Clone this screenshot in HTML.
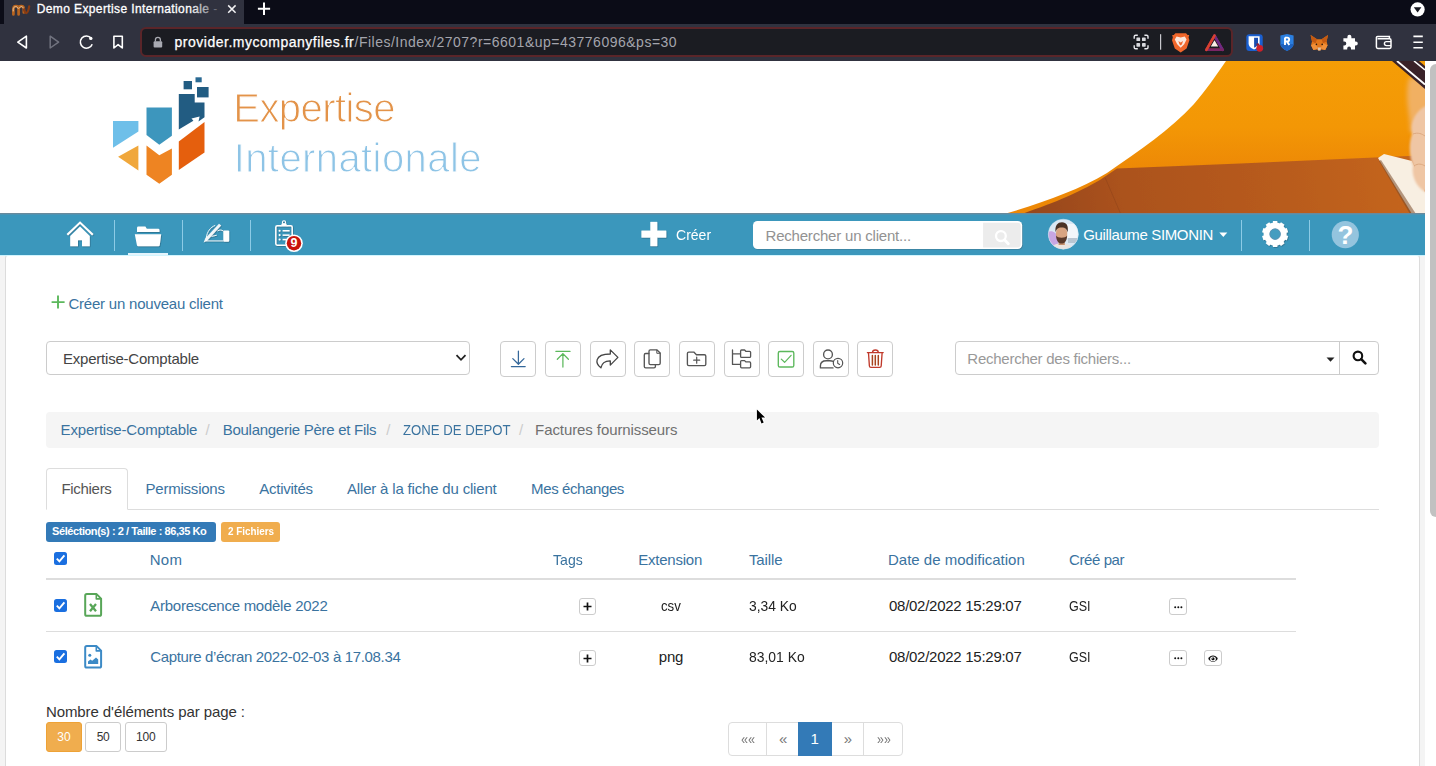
<!DOCTYPE html>
<html lang="fr">
<head>
<meta charset="utf-8">
<title>Demo Expertise Internationale</title>
<style>
*{box-sizing:border-box;margin:0;padding:0}
html,body{width:1436px;height:766px;overflow:hidden;background:#fff}
body{font-family:"Liberation Sans",sans-serif;position:relative;color:#333}
.a{position:absolute}
.t{position:absolute;white-space:nowrap;line-height:20px}
svg{position:absolute;overflow:visible}
/* chrome */
#tabstrip{left:0;top:0;width:1436px;height:24px;background:#0b0c17}
#tab{left:4px;top:0;width:240px;height:24px;background:#30323f}
#toolbar{left:0;top:24px;width:1436px;height:37px;background:#30323f}
#url{left:140px;top:27px;width:1093px;height:30px;background:#1b1c22;border:2px solid #5a2529;border-radius:6px}
/* page */
#nav{left:0;top:213px;width:1425px;height:42px;background:#3b97bc;border-top:1px solid #688a9c;box-shadow:inset 0 1px 0 #4f93b2}
.sep{position:absolute;top:220px;width:1px;height:31px;background:#8ccbe6}
#pagebg{left:0;top:255px;width:1425px;height:511px;background:#f4f4f4;border-top:1px solid #c9f3fd}
#panel{left:5px;top:255px;width:1415px;height:540px;background:#fff;border:1px solid #dcdcdc;border-top-color:#d2f5fe;border-radius:3px 3px 0 0}
#sbar{left:1425px;top:61px;width:11px;height:705px;background:#fff}
#thumb{left:1430px;top:64px;width:12px;height:453px;background:#c1c1c1;border-radius:6px}
.btn{position:absolute;background:#fff;border:1px solid #ccc;border-radius:4px}
</style>
</head>
<body>
<!-- ===== browser chrome ===== -->
<div class="a" id="tabstrip"></div>
<div class="a" id="tab"></div>
<div class="a" id="toolbar"></div>
<div class="a" id="url"></div>
<svg style="left:0;top:0" width="1436" height="61" viewBox="0 0 1436 61">
<!-- favicon "mv" -->
<g fill="none" stroke-linecap="round" stroke-linejoin="round">
<path d="M13.4 14.4 V9.2 C13.4 5.2 18.6 5.2 18.6 9.2 V14.4 M18.6 9.2 C18.6 5.2 23.8 5.2 23.8 9.2 V12.4" stroke="#b9651f" stroke-width="2.7"/>
<path d="M23.8 8.8 C24.4 11.6 25.4 13 26.3 13 C27.7 13 28.6 9.7 29.2 6.4" stroke="#8a3c12" stroke-width="2.3"/>
<path d="M13.2 11 V9.2 C13.2 6.2 17.4 5.4 18.2 8.4 M19.4 8 C20.4 5.8 22.8 6 23.2 8" stroke="#e6c7a3" stroke-width="1"/>
</g>
<!-- tab close -->
<path d="M228.2 5.4 L235.6 12.8 M235.6 5.4 L228.2 12.8" stroke="#f2f2f4" stroke-width="1.5"/>
<!-- new tab plus -->
<path d="M264 2.5 V15 M257.9 8.8 H270.1" stroke="#fff" stroke-width="2"/>
<!-- top right dropdown -->
<circle cx="1417.6" cy="9.4" r="7.1" fill="#fff"/>
<path d="M1413.8 7.2 H1421.4 L1417.6 12.6 Z" fill="#16171f"/>
<!-- back / forward -->
<path d="M26.4 36.2 V48 L17.8 42.1 Z" stroke="#fff" stroke-width="1.6" fill="none" stroke-linejoin="round"/>
<path d="M50.2 36.2 V48 L58.6 42.1 Z" stroke="#71737f" stroke-width="1.5" fill="none" stroke-linejoin="round"/>
<!-- reload -->
<path d="M91.2 38.2 A6.1 6.1 0 1 0 92.2 44.2" stroke="#fff" stroke-width="1.6" fill="none"/>
<circle cx="90.8" cy="38.4" r="1.7" fill="#fff"/>
<!-- bookmark -->
<path d="M113.9 36.3 H122.3 V48 L118.1 44.6 L113.9 48 Z" stroke="#fff" stroke-width="1.6" fill="none" stroke-linejoin="round"/>
<!-- lock -->
<rect x="153.6" y="41.2" width="8.6" height="6.2" rx="1" fill="#a9aab2"/>
<path d="M155.4 41.4 V39.8 A2.5 2.5 0 0 1 160.4 39.8 V41.4" stroke="#a9aab2" stroke-width="1.3" fill="none"/>
<!-- qr / grid -->
<g stroke="#e9e9ee" stroke-width="1.4" fill="none">
<path d="M1134.2 38.8 V36.6 Q1134.2 35.2 1135.6 35.2 H1137.8 M1144.4 35.2 H1146.6 Q1148 35.2 1148 36.6 V38.8 M1148 45.2 V47.4 Q1148 48.8 1146.6 48.8 H1144.4 M1137.8 48.8 H1135.6 Q1134.2 48.8 1134.2 47.4 V45.2"/>
</g>
<g fill="#d9d9de">
<rect x="1136.4" y="37.4" width="3.7" height="3.7" rx=".7"/><rect x="1142" y="37.4" width="3.7" height="3.7" rx=".7"/>
<rect x="1136.4" y="43" width="3.7" height="3.7" rx=".7"/><rect x="1142" y="43" width="3.7" height="3.7" rx=".7"/>
</g>
<rect x="1160" y="34.2" width="1.2" height="15.5" fill="#c8c8ce"/>
<!-- brave lion -->
<path d="M1175.4 33.2 H1186 L1187.6 35 L1189.2 35 L1188.6 37.6 L1189.4 40.2 L1186.6 48.6 L1180.7 52.4 L1174.8 48.6 L1172 40.2 L1172.8 37.6 L1172.2 35 L1173.8 35 Z" fill="#f0662b"/>
<path d="M1176.6 36.6 L1180.7 37.6 L1184.8 36.6 L1186.6 39.6 L1184.2 44.2 L1180.7 47.8 L1177.2 44.2 L1174.8 39.6 Z" fill="#fbe6dc"/>
<path d="M1178.4 41 L1180.7 42.6 L1183 41 L1182 44.2 L1180.7 45.6 L1179.4 44.2 Z" fill="#f0662b"/>
<!-- BAT triangle -->
<path d="M1214.5 35.6 L1222.6 49.8 H1206.4 Z" fill="none" stroke="#a8283f" stroke-width="2.6" stroke-linejoin="round"/>
<path d="M1214.5 35.6 L1222.6 49.8" stroke="#6a2a86" stroke-width="2.6" stroke-linecap="round"/>
<path d="M1206.4 49.8 H1222.6" stroke="#7a2566" stroke-width="2.6" stroke-linecap="round"/>
<path d="M1214.5 35.6 L1206.4 49.8" stroke="#d8402f" stroke-width="2.6" stroke-linecap="round"/>
<path d="M1214.5 40.2 L1218.2 46.6 H1210.8 Z" fill="#fbeee6"/>
<!-- bitwarden -->
<rect x="1246.3" y="34.2" width="16.4" height="16.8" rx="3" fill="#1a5fd0"/>
<path d="M1248.6 36.2 H1259.6 V43.2 C1259.6 46.6 1256.8 48.4 1254.1 49.4 C1251.4 48.4 1248.6 46.6 1248.6 43.2 Z" fill="#fff"/>
<path d="M1254.1 37.8 H1258 V43.2 C1258 45.6 1256.2 46.8 1254.1 47.7 Z" fill="#1a4db0"/>
<circle cx="1259.7" cy="48.3" r="3.4" fill="#cf2028"/>
<circle cx="1257.8" cy="44.6" r="1.4" fill="#8a2238"/>
<!-- blue shield R -->
<path d="M1280.4 35.4 L1287 34.1 L1293.6 35.4 V43.8 C1293.6 47.2 1290.4 49.4 1287 51 C1283.6 49.4 1280.4 47.2 1280.4 43.8 Z" fill="#2b7fe0"/>
<path d="M1280.4 44 C1280.8 47.2 1283.8 49.4 1287 51 C1290.2 49.4 1293.2 47.2 1293.6 44 Z" fill="#1f63c0"/>
<path d="M1285 37.6 V45 M1285 37.6 H1287.2 C1289.8 37.6 1289.8 41.4 1287.2 41.4 H1285 M1287 41.4 L1289.3 45" stroke="#fff" stroke-width="1.9" fill="none" stroke-linejoin="round"/>
<!-- metamask fox -->
<path d="M1310.6 35 L1317 39.2 H1321.6 L1328 35 L1326.6 41.4 L1327.6 45.2 L1325.2 50 L1321.8 49.2 L1320.4 50.6 H1318.2 L1316.8 49.2 L1313.4 50 L1311 45.2 L1312 41.4 Z" fill="#e2761b"/>
<path d="M1310.6 35 L1317 39.2 L1315.6 43.2 L1312 41.4 Z M1328 35 L1321.6 39.2 L1323 43.2 L1326.6 41.4 Z" fill="#c45a12"/>
<path d="M1315.6 43.2 L1317.6 47.4 L1316.8 49.2 L1313.4 50 L1311 45.2 Z M1323 43.2 L1321 47.4 L1321.8 49.2 L1325.2 50 L1327.6 45.2 Z" fill="#f0903a"/>
<path d="M1317.6 47.4 H1321 L1320.4 50.6 H1318.2 Z" fill="#d9c3b0"/>
<circle cx="1316.4" cy="44.4" r=".8" fill="#2a1a10"/><circle cx="1322.2" cy="44.4" r=".8" fill="#2a1a10"/>
<!-- puzzle -->
<path d="M1347.4 36.8 A2 2 0 0 1 1351.4 36.8 V38.2 H1355 V41.6 H1355.8 A2 2 0 0 1 1355.8 45.6 H1355 V49.4 H1351 V48.4 A1.9 1.9 0 0 0 1347.2 48.4 V49.4 H1343.4 V45.4 H1344.4 A1.9 1.9 0 0 0 1344.4 41.6 H1343.4 V38.2 H1347.4 Z" fill="#fff"/>
<!-- wallet -->
<path d="M1376.4 37.6 Q1376.4 36.4 1377.6 36.4 H1389.4 V38.8 M1376.4 37.6 V47 Q1376.4 48.4 1377.8 48.4 H1389.6 Q1391 48.4 1391 47 V40.2 Q1391 38.8 1389.6 38.8 H1377.6" stroke="#fff" stroke-width="1.5" fill="none"/>
<path d="M1391 41.6 H1386.4 A2 2 0 0 0 1386.4 45.6 H1391" stroke="#fff" stroke-width="1.4" fill="none"/>
<!-- hamburger -->
<path d="M1413.4 36.4 H1422.8 M1413.4 42.2 H1422.8 M1413.4 47.8 H1422.8" stroke="#fff" stroke-width="1.6"/>
</svg>

<!-- ===== banner ===== -->
<svg style="left:0;top:61px" width="1425" height="152" viewBox="0 61 1425 152">
<defs>
<clipPath id="bclip"><rect x="0" y="61" width="1425" height="152"/></clipPath>
<linearGradient id="brn" gradientUnits="userSpaceOnUse" x1="1030" y1="214" x2="1400" y2="150"><stop offset="0" stop-color="#96471e"/><stop offset=".25" stop-color="#ab521c"/><stop offset=".7" stop-color="#b95c1c"/><stop offset="1" stop-color="#c4651d"/></linearGradient>
<linearGradient id="org" gradientUnits="userSpaceOnUse" x1="0" y1="61" x2="0" y2="170"><stop offset="0" stop-color="#f59d06"/><stop offset=".6" stop-color="#f39705"/><stop offset="1" stop-color="#ed8806"/></linearGradient>
<filter id="soft" x="-5%" y="-5%" width="110%" height="110%"><feGaussianBlur stdDeviation="0.6"/></filter>
<filter id="soft2" x="-30%" y="-30%" width="160%" height="160%"><feGaussianBlur stdDeviation="2.2"/></filter>
<filter id="soft3" x="-20%" y="-20%" width="140%" height="140%"><feGaussianBlur stdDeviation="1"/></filter>
</defs>
<g clip-path="url(#bclip)">
<!-- orange surface -->
<path d="M1226 61 C1214 78 1206 90 1194 104 C1170 130 1140 150 1107 173 C1078 190 1045 202 1006 213.5 L1425 213.5 L1425 61 Z" fill="url(#org)"/>
<!-- brown lower region -->
<path d="M1117 168.4 L1240 163.4 L1425 155.3 L1425 214 L1022 214 C1040 207.5 1054 202.5 1066.8 196.8 C1082 190 1094 184 1103.6 177.6 Z" fill="url(#brn)" filter="url(#soft)"/>
<path d="M1105.3 178 L1120.3 213" stroke="#8e431a" stroke-width="0.9" opacity=".6"/>
<!-- paper -->
<path d="M1378 158 L1384 154 L1412 161 L1425 192 L1425 214 L1412 214 Z" fill="#f8efe2"/>
<path d="M1379 161 L1410 214 L1416 214 L1381 160 Z" fill="#7a4a2a" opacity=".55"/>
<!-- light area near hand -->
<path d="M1409 78 C1404 100 1411 116 1410 132 L1430 132 L1430 78 Z" fill="#f1b062" filter="url(#soft2)"/>
<!-- hand -->
<path d="M1430 104 C1414 110 1410 124 1412 134 C1408 146 1410 158 1413 166 C1411 176 1417 190 1430 194 Z" fill="#efc6a4" filter="url(#soft3)"/>
<path d="M1413 134 C1418 132 1422 134 1425 136 M1414 166 C1418 163 1422 164 1425 166" stroke="#cf9468" stroke-width="1" fill="none" opacity=".6" filter="url(#soft)"/>
<!-- pen / dark strip -->
<path d="M1392 61 L1425 89 L1425 66 L1419 61 Z" fill="#3a2228"/>
<path d="M1397 61 L1425 84.5" stroke="#fff" stroke-width="1.8"/>
<path d="M1414 61 L1425 70" stroke="#fff" stroke-width="1.6"/>
</g>
<!-- logo -->
<g filter="url(#soft)">
<path d="M113 121 H138.4 V131.6 L113 147.8 Z" fill="#6ebfe9"/>
<path d="M146.5 107.4 H171.9 V135.8 L159.3 144.7 L146.5 135 Z" fill="#3e96bd"/>
<path d="M178.8 94 H194.7 V102.4 H204.5 V117.2 L198.5 121.5 L199.6 116.6 L191.5 118.6 L193.4 120.8 L178.8 129.4 Z" fill="#235b82"/>
<rect x="183.6" y="81" width="8.4" height="8.3" fill="#235b82"/>
<rect x="195.5" y="77.3" width="6.2" height="5" fill="#2c6a93"/>
<rect x="197" y="87" width="11.6" height="10.4" fill="#235b82"/>
<path d="M118.1 156.7 L138.4 145.6 V170.6 Z" fill="#f0a73a"/>
<path d="M146.5 145.6 L159.3 155.3 L171.9 148.4 V174.8 L159.3 183.7 L146.5 174.8 Z" fill="#ee8424"/>
<path d="M178.8 141.4 L204.5 121.9 V152.5 L178.8 170 Z" fill="#e55f10"/>
</g>
</svg>

<!-- ===== nav ===== -->
<div class="a" id="nav"></div>
<div class="sep" style="left:114px"></div>
<div class="sep" style="left:182px"></div>
<div class="sep" style="left:250px"></div>
<div class="sep" style="left:1241px"></div>
<div class="sep" style="left:1309px"></div>
<!-- active underline -->
<div class="a" style="left:128px;top:252.6px;width:40px;height:2.6px;background:#e4f5fd"></div>
<svg style="left:0;top:213px" width="1425" height="42" viewBox="0 213 1425 42">
<defs><filter id="ish" x="-20%" y="-20%" width="140%" height="140%"><feDropShadow dx="0.6" dy="0.7" stdDeviation="0.4" flood-color="#1d4458" flood-opacity=".55"/></filter></defs>
<g filter="url(#ish)" fill="#fff">
<!-- home -->
<path d="M67.3 234.8 L80.05 222.6 L92.8 234.8" stroke="#fff" stroke-width="2.1" fill="none" stroke-linejoin="miter"/>
<path d="M80.05 226.6 L89.8 236 V246.2 H82 V240.2 H78 V246.2 H70.2 V236 Z"/>
<!-- folder open -->
<path d="M137 232 V228 Q137 226.6 138.4 226.6 H145.4 L146.8 228.8 H158.2 Q159.5 228.8 159.5 230.2 V232 Z"/>
<path d="M134.8 234.2 H161.2 L159.8 245 Q159.6 246.2 158.4 246.2 H138.3 Q137.1 246.2 136.9 245 Z"/>
<!-- signature hand -->
<path d="M219 223.8 L221.2 225.4 L207.4 240.4 L203.6 242.5 L205.2 238.6 Z" opacity=".92"/>
<path d="M206.2 238.2 C207 231.5 210.5 227.2 215.2 225.4" stroke="#fff" stroke-width="0.9" fill="none"/>
<path d="M217.5 231 C219.5 229.6 221.6 229.8 223.4 231 M211.5 236.4 L216.8 235.2 M205.6 240.9 H223.4" stroke="#fff" stroke-width="0.9" fill="none"/>
<rect x="223.3" y="230.6" width="5.9" height="11.1" rx="1"/>
<!-- clipboard -->
<path d="M281.2 225.8 H277.2 Q275.8 225.8 275.8 227.2 V243.8 Q275.8 245.2 277.2 245.2 H290.8 Q292.2 245.2 292.2 243.8 V227.2 Q292.2 225.8 290.8 225.8 H286.8" stroke="#fff" stroke-width="1.5" fill="none"/>
<path d="M280.6 226.6 L281.8 223.6 H286.2 L287.4 226.6 Z"/>
<circle cx="284" cy="222.4" r="1.6" stroke="#fff" stroke-width="1.1" fill="none"/>
<circle cx="279.6" cy="230.7" r="1.05"/><rect x="282.6" y="230" width="7" height="1.5"/>
<circle cx="279.6" cy="235.1" r="1.05"/><rect x="282.6" y="234.4" width="7" height="1.5"/>
<circle cx="279.6" cy="239.5" r="1.05"/><rect x="282.6" y="238.8" width="7" height="1.5"/>
<!-- big plus -->
<path d="M650.5 222.1 H657.1 V230.8 H666.1 V237.4 H657.1 V246 H650.5 V237.4 H641.6 V230.8 H650.5 Z" stroke="#fff" stroke-width="0.4" stroke-linejoin="round"/>
</g>
<!-- badge -->
<circle cx="294" cy="243.2" r="8.8" fill="#fff"/>
<circle cx="294" cy="243.2" r="7.2" fill="#c8140c"/>
<!-- search client input -->
<rect x="753.6" y="221.7" width="269.4" height="28" rx="4.5" fill="#3f6f86" opacity=".55"/>
<rect x="753" y="221" width="269.2" height="28" rx="4.5" fill="#fff"/>
<path d="M983.1 222.8 H1017.4 Q1020.8 222.8 1020.8 226.2 V244 Q1020.8 247.4 1017.4 247.4 H983.1 Z" fill="#ececec"/>
<circle cx="1000.9" cy="236.1" r="4.9" stroke="#fff" stroke-width="2.3" fill="none"/>
<path d="M1004.7 239.9 L1008.3 243.7" stroke="#fff" stroke-width="2.9" stroke-linecap="round"/>
<!-- avatar -->
<defs><clipPath id="avc"><circle cx="1063.3" cy="234.2" r="15"/></clipPath></defs>
<g clip-path="url(#avc)">
<rect x="1048" y="218" width="31" height="32" fill="#dbe8f4"/>
<rect x="1067" y="224" width="12" height="14" fill="#f2f6fa"/>
<rect x="1068" y="238" width="11" height="5" fill="#b9c6d2"/>
<path d="M1048 232 C1052 230 1057 233 1058 238 V247 H1048 Z" fill="#c7a6e2"/>
<path d="M1050 250 C1051 245.5 1056 243.6 1061.6 243.6 C1067.5 243.6 1072.5 245.5 1074 250 Z" fill="#ebe3df"/>
<rect x="1058.6" y="239" width="6.2" height="6" fill="#c4906f"/>
<ellipse cx="1061.6" cy="233.8" rx="5.7" ry="7.4" fill="#d8a482"/>
<path d="M1056 235.6 C1056.4 242 1059.2 243.6 1061.6 243.6 C1064 243.6 1066.8 242 1067.2 235.6 C1065.4 238.6 1057.8 238.6 1056 235.6 Z" fill="#5a3a2c"/>
<path d="M1055.6 232.4 C1054.6 225.4 1057.6 222.2 1062 222.2 C1066.4 222.2 1068.8 225.6 1067.6 232.4 C1066.8 229.2 1065.6 227.6 1061.6 227.6 C1057.8 227.6 1056.4 229.2 1055.6 232.4 Z" fill="#4a3226"/>
</g>
<circle cx="1063.3" cy="234.2" r="15" fill="none" stroke="#cfe6f2" stroke-width="0.8" opacity=".6"/>
<!-- caret -->
<path d="M1219.3 232.6 H1227.3 L1223.3 237 Z" fill="#fff"/>
<!-- gear -->
<g filter="url(#ish)">
<circle cx="1275.1" cy="234.1" r="8.4" stroke="#fff" stroke-width="6.2" fill="none"/>
<path d="M1275.10 224.60 L1275.10 221.10 M1280.68 226.41 L1282.74 223.58 M1284.14 231.16 L1287.46 230.08 M1284.14 237.04 L1287.46 238.12 M1280.68 241.79 L1282.74 244.62 M1275.10 243.60 L1275.10 247.10 M1269.52 241.79 L1267.46 244.62 M1266.06 237.04 L1262.74 238.12 M1266.06 231.16 L1262.74 230.08 M1269.52 226.41 L1267.46 223.58" stroke="#fff" stroke-width="4.4" stroke-linecap="butt" fill="none"/>
</g>
<circle cx="1275.1" cy="234.1" r="5.3" stroke="#5f93b4" stroke-width="0.9" fill="#459dc0"/>
<!-- help -->
<circle cx="1345.3" cy="234.7" r="13.6" fill="#94c4de"/>
</svg>
<div class="t" style="left:1337.6px;top:220.2px;font-size:26px;line-height:30px;font-weight:700;color:#fff">?</div>
<div class="t" style="left:290.4px;top:236.2px;font-size:12.5px;line-height:14px;font-weight:700;color:#fff">9</div>

<!-- ===== content ===== -->
<div class="a" id="pagebg"></div>
<div class="a" id="panel"></div>
<!-- create client plus -->
<svg style="left:51px;top:295px" width="14" height="14" viewBox="0 0 14 14"><path d="M7 0.6V13.6M0.6 7.1H13.6" stroke="#5cb85c" stroke-width="1.9" fill="none"/></svg>
<!-- select -->
<div class="btn" style="left:46px;top:341px;width:424px;height:34px"></div>
<svg style="left:455px;top:353px" width="12" height="10" viewBox="0 0 12 10"><path d="M1.5 2.2L6 6.8L10.5 2.2" stroke="#222" stroke-width="1.8" fill="none" stroke-linejoin="miter"/></svg>
<!-- action buttons -->
<div class="btn" style="left:500px;top:341px;width:36px;height:36px"></div>
<div class="btn" style="left:545px;top:341px;width:36px;height:36px"></div>
<div class="btn" style="left:590px;top:341px;width:36px;height:36px"></div>
<div class="btn" style="left:634px;top:341px;width:36px;height:36px"></div>
<div class="btn" style="left:679px;top:341px;width:36px;height:36px"></div>
<div class="btn" style="left:724px;top:341px;width:36px;height:36px"></div>
<div class="btn" style="left:768px;top:341px;width:36px;height:36px"></div>
<div class="btn" style="left:813px;top:341px;width:36px;height:36px"></div>
<div class="btn" style="left:857px;top:341px;width:36px;height:36px"></div>
<svg style="left:0;top:341px" width="900" height="36" viewBox="0 341 900 36" fill="none" stroke-linecap="round" stroke-linejoin="round">
<!-- download -->
<g stroke="#35689a" stroke-width="1.25">
<path d="M518.4 351.1 V364.2 M512.8 358.6 L518.4 364.3 L524 358.6 M511.4 366.6 H525.2"/>
</g>
<!-- upload -->
<g stroke="#5cb85c" stroke-width="1.25">
<path d="M555.9 351.4 H570 M562.9 353.6 V367 M557.3 359.3 L562.9 353.6 L568.4 359.3"/>
</g>
<!-- share -->
<path d="M610.3 349.9 L617.9 357.4 L610.3 365.1 V360.8 C606 360.7 602 362.4 600.9 367.8 C597.6 365.2 596.3 362.4 597.2 359.6 C598.4 355.6 603 354 610.3 354 Z" stroke="#444" stroke-width="1.3"/>
<!-- copy -->
<g stroke="#555" stroke-width="1.35">
<path d="M650.4 349.9 H657 L660.2 353.1 V363.2 Q660.2 364.6 658.8 364.6 H650.4 Q649 364.6 649 363.2 V351.3 Q649 349.9 650.4 349.9 Z"/>
<path d="M656.8 350.2 V353.3 H659.9" stroke-width="1"/>
<path d="M648.8 353.5 H645.7 Q644.3 353.5 644.3 354.9 V366.4 Q644.3 367.8 645.7 367.8 H654 Q655.4 367.8 655.4 366.4 V364.8"/>
</g>
<!-- folder plus -->
<g stroke="#555" stroke-width="1.35">
<path d="M688.8 352.1 H693.8 L696.4 354.7 H704.4 Q705.8 354.7 705.8 356.1 V364.2 Q705.8 365.6 704.4 365.6 H688.8 Q687.4 365.6 687.4 364.2 V353.5 Q687.4 352.1 688.8 352.1 Z"/>
<path d="M696.7 357.2 V363.2 M693.7 360.2 H699.7" stroke-width="1.2"/>
</g>
<!-- folder tree -->
<g stroke="#555" stroke-width="1.3">
<path d="M732.5 349.9 V364.4 H740.4 M732.5 353.9 H740.4"/>
<path d="M741.6 350 H744.6 L745.8 351.3 H749.6 Q750.6 351.3 750.6 352.3 V356.4 Q750.6 357.4 749.6 357.4 H741.6 Q740.6 357.4 740.6 356.4 V351 Q740.6 350 741.6 350 Z"/>
<path d="M741.6 360.6 H744.6 L745.8 361.9 H749.6 Q750.6 361.9 750.6 362.9 V366.8 Q750.6 367.8 749.6 367.8 H741.6 Q740.6 367.8 740.6 366.8 V361.6 Q740.6 360.6 741.6 360.6 Z"/>
</g>
<!-- check square -->
<g stroke="#5cb85c" stroke-width="1.35">
<rect x="778.3" y="351.5" width="15.5" height="15.5" rx="1.6"/>
<path d="M781.3 359.1 L784.6 362.3 L791.1 355.3" stroke-width="1.2"/>
</g>
<!-- user clock -->
<g stroke="#555" stroke-width="1.35">
<circle cx="828" cy="354.4" r="4.4"/>
<path d="M833 367.9 H820.4 V366 C820.4 362.4 823.2 360.7 826.4 360.7 H829.8 C831.2 360.7 832.4 361 833.4 361.4"/>
<circle cx="838" cy="363.1" r="4.7" stroke-width="1.2"/>
<path d="M837.7 360.6 V363.3 L839.6 364.4" stroke-width="1.1"/>
</g>
<!-- trash -->
<g stroke="#c0392b" stroke-width="1.35">
<path d="M867.4 352.6 H883.2 M872.5 352.4 C872.6 349.2 878.2 349.2 878.3 352.4"/>
<path d="M868.5 353 L869.4 366 Q869.5 367.4 870.9 367.4 H879.7 Q881.1 367.4 881.2 366 L882.1 353"/>
<path d="M872.4 355.4 V365 M875.3 355.4 V365 M878.3 355.4 V365" stroke-width="1.5" stroke="#a8431d"/>
</g>
</svg>

<!-- search files -->
<div class="btn" style="left:955px;top:341px;width:424px;height:34px"></div>
<div class="a" style="left:1339px;top:342px;width:1px;height:32px;background:#ccc"></div>
<svg style="left:1326px;top:357px" width="9" height="6" viewBox="0 0 9 6"><path d="M0.5 0.5H8.5L4.5 4.8Z" fill="#222"/></svg>
<svg style="left:1352px;top:350px" width="15" height="15" viewBox="0 0 15 15"><circle cx="5.9" cy="5.9" r="4.3" stroke="#111" stroke-width="2.1" fill="none"/><path d="M9.2 9.2L13.4 13.4" stroke="#111" stroke-width="2.6" stroke-linecap="round"/></svg>
<!-- breadcrumb -->
<div class="a" style="left:46px;top:412px;width:1333px;height:36px;background:#f5f5f5;border-radius:4px"></div>
<!-- tabs -->
<div class="a" style="left:46px;top:509px;width:1333px;height:1px;background:#ddd"></div>
<div class="a" style="left:46px;top:468px;width:82px;height:42px;background:#fff;border:1px solid #ddd;border-bottom-color:#fff;border-radius:4px 4px 0 0"></div>
<!-- badges -->
<div class="a" style="left:46px;top:522px;width:170px;height:19.5px;background:#337ab7;border-radius:3px"></div>
<div class="a" style="left:221px;top:522px;width:59px;height:19.5px;background:#f0ad4e;border-radius:3px"></div>
<!-- table lines -->
<div class="a" style="left:46px;top:578px;width:1250px;height:2px;background:#ddd"></div>
<div class="a" style="left:46px;top:631px;width:1250px;height:1px;background:#ddd"></div>
<!-- checkboxes -->
<svg style="left:54px;top:552px" width="13" height="13" viewBox="0 0 13 13"><rect width="13" height="13" rx="2.5" fill="#1a6fe0"/><path d="M2.8 6.6L5.4 9.4L10.4 3.4" stroke="#fff" stroke-width="1.9" fill="none"/></svg>
<svg style="left:54px;top:599px" width="13" height="13" viewBox="0 0 13 13"><rect width="13" height="13" rx="2.5" fill="#1a6fe0"/><path d="M2.8 6.6L5.4 9.4L10.4 3.4" stroke="#fff" stroke-width="1.9" fill="none"/></svg>
<svg style="left:54px;top:650px" width="13" height="13" viewBox="0 0 13 13"><rect width="13" height="13" rx="2.5" fill="#1a6fe0"/><path d="M2.8 6.6L5.4 9.4L10.4 3.4" stroke="#fff" stroke-width="1.9" fill="none"/></svg>
<svg style="left:80px;top:590px" width="30" height="84" viewBox="80 590 30 84" fill="none" stroke-linejoin="round">
<g stroke="#58a658" stroke-width="2">
<path d="M86.8 594.1 H96.6 L101.1 598.6 V614.2 Q101.1 615.8 99.5 615.8 H86.8 Q85.2 615.8 85.2 614.2 V595.7 Q85.2 594.1 86.8 594.1 Z"/>
<path d="M96.3 594.4 V598.9 H100.8" stroke-width="1.6"/>
<path d="M90 604 L96 611.2 M96 604 L90 611.2" stroke-width="2.3"/>
</g>
<g stroke="#3c8ac6" stroke-width="2">
<path d="M86.8 646.1 H96.6 L101.1 650.6 V666 Q101.1 667.6 99.5 667.6 H86.8 Q85.2 667.6 85.2 666 V647.7 Q85.2 646.1 86.8 646.1 Z"/>
<path d="M96.3 646.4 V650.9 H100.8" stroke-width="1.6"/>
</g>
<circle cx="89.8" cy="655.2" r="1.5" fill="#3c8ac6"/>
<path d="M88 664 V661.4 L90.4 659.4 L92.2 660.8 L96 657.4 L98.2 659.4 V664 Z" fill="#3c8ac6"/>
</svg>

<!-- tag + buttons -->
<div class="btn" style="left:579px;top:598px;width:17px;height:17px;border-radius:3px"></div>
<svg style="left:583px;top:602px" width="9" height="9" viewBox="0 0 9 9"><path d="M4.5 0.5V8.5M0.5 4.5H8.5" stroke="#111" stroke-width="1.7"/></svg>
<div class="btn" style="left:579px;top:650px;width:17px;height:16px;border-radius:3px"></div>
<svg style="left:583px;top:653.5px" width="9" height="9" viewBox="0 0 9 9"><path d="M4.5 0.5V8.5M0.5 4.5H8.5" stroke="#111" stroke-width="1.7"/></svg>
<!-- ... buttons -->
<div class="btn" style="left:1169px;top:598px;width:18px;height:17px;border-radius:3px"></div>
<svg style="left:1174px;top:605.5px" width="9" height="3" viewBox="0 0 9 3"><circle cx="1.2" cy="1.3" r="1" fill="#111"/><circle cx="4.3" cy="1.3" r="1" fill="#111"/><circle cx="7.4" cy="1.3" r="1" fill="#111"/></svg>
<div class="btn" style="left:1169px;top:650px;width:18px;height:16px;border-radius:3px"></div>
<svg style="left:1174px;top:657px" width="9" height="3" viewBox="0 0 9 3"><circle cx="1.2" cy="1.3" r="1" fill="#111"/><circle cx="4.3" cy="1.3" r="1" fill="#111"/><circle cx="7.4" cy="1.3" r="1" fill="#111"/></svg>
<div class="btn" style="left:1204px;top:650px;width:18px;height:16px;border-radius:3px"></div>
<svg style="left:1207px;top:654px" width="12" height="10" viewBox="1207 654 12 10"><path d="M1208.2 658.8 C1210.4 654.4 1215.6 654.4 1217.8 658.8 C1215.6 662.9 1210.4 662.9 1208.2 658.8 Z" fill="#111"/><ellipse cx="1213" cy="658.9" rx="2.9" ry="2.5" fill="#fff"/><circle cx="1213" cy="658.7" r="1.55" fill="#111"/><circle cx="1212.4" cy="658" r=".5" fill="#fff"/></svg>
<!-- page size buttons -->
<div class="btn" style="left:46px;top:722px;width:36px;height:30px;background:#f0ad4e;border-color:#eea236;border-radius:3px"></div>
<div class="btn" style="left:85px;top:722px;width:36px;height:30px;border-radius:3px"></div>
<div class="btn" style="left:125px;top:722px;width:42px;height:30px;border-radius:3px"></div>
<!-- pagination -->
<div class="btn" style="left:728px;top:722px;width:175px;height:34px;border-color:#ddd"></div>
<div class="a" style="left:766px;top:723px;width:1px;height:32px;background:#ddd"></div>
<div class="a" style="left:798px;top:722px;width:34px;height:34px;background:#337ab7"></div>
<div class="a" style="left:863px;top:723px;width:1px;height:32px;background:#ddd"></div>

<div class="t" style="left:36.7px;top:-1.3px;font-size:12px;color:#fff;letter-spacing:0.39px;-webkit-text-stroke:0.3px #fff">Demo Expertise Internationale</div>
<div class="t" style="left:213.2px;top:-1.3px;font-size:12px;color:#6b6d78">-</div>
<div class="t" style="left:174.5px;top:32.1px;font-size:14px;color:#fff;letter-spacing:0.51px;-webkit-text-stroke:.25px #fff">provider.mycompanyfiles.fr</div>
<div class="t" style="left:354.5px;top:32.1px;font-size:14px;color:#a4a5ad;letter-spacing:0.50px">/Files/Index/2707?r=6601&amp;up=43776096&amp;ps=30</div>
<div class="t" style="left:233.3px;top:97.7px;font-size:40px;color:#e39349;letter-spacing:-0.56px;-webkit-text-stroke:1.05px #fff;filter:blur(.45px)">Expertise</div>
<div class="t" style="left:233.7px;top:148.2px;font-size:40px;color:#8ec4e6;letter-spacing:0.41px;-webkit-text-stroke:1.05px #fff;filter:blur(.45px)">Internationale</div>
<div class="t" style="left:676.4px;top:224.9px;font-size:15px;color:#fff;transform:scaleX(0.9357);transform-origin:0 0">Créer</div>
<div class="t" style="left:765.5px;top:225.5px;font-size:15px;color:#929292;letter-spacing:-0.20px">Rechercher un client...</div>
<div class="t" style="left:1083.2px;top:225.3px;font-size:15px;color:#fff;letter-spacing:-0.36px">Guillaume SIMONIN</div>
<div class="t" style="left:68.4px;top:294.3px;font-size:15px;color:#3a739f;letter-spacing:-0.21px">Créer un nouveau client</div>
<div class="t" style="left:63.0px;top:348.6px;font-size:15px;color:#444;letter-spacing:-0.22px">Expertise-Comptable</div>
<div class="t" style="left:967.3px;top:348.8px;font-size:15px;color:#999;letter-spacing:-0.25px">Rechercher des fichiers...</div>
<div class="t" style="left:60.6px;top:419.9px;font-size:15px;color:#3a739f;letter-spacing:-0.18px">Expertise-Comptable</div>
<div class="t" style="left:205.5px;top:419.9px;font-size:15px;color:#ccc">/</div>
<div class="t" style="left:222.7px;top:419.9px;font-size:15px;color:#3a739f;letter-spacing:-0.27px">Boulangerie Père et Fils</div>
<div class="t" style="left:386.2px;top:419.9px;font-size:15px;color:#ccc">/</div>
<div class="t" style="left:402.7px;top:419.9px;font-size:15px;color:#3a739f;transform:scaleX(0.8770);transform-origin:0 0">ZONE DE DEPOT</div>
<div class="t" style="left:519.1px;top:419.9px;font-size:15px;color:#ccc">/</div>
<div class="t" style="left:535.1px;top:419.9px;font-size:15px;color:#707070;letter-spacing:-0.09px">Factures fournisseurs</div>
<div class="t" style="left:61.4px;top:478.6px;font-size:15px;color:#555;letter-spacing:-0.29px">Fichiers</div>
<div class="t" style="left:145.5px;top:478.6px;font-size:15px;color:#3a739f;letter-spacing:-0.22px">Permissions</div>
<div class="t" style="left:259.3px;top:478.6px;font-size:15px;color:#3a739f;letter-spacing:-0.26px">Activités</div>
<div class="t" style="left:347.0px;top:478.6px;font-size:15px;color:#3a739f;letter-spacing:-0.18px">Aller à la fiche du client</div>
<div class="t" style="left:531.1px;top:478.6px;font-size:15px;color:#3a739f;letter-spacing:-0.39px">Mes échanges</div>
<div class="t" style="left:52.1px;top:521.4px;font-size:11px;color:#fff;letter-spacing:-0.43px;font-weight:700">Séléction(s) : 2 / Taille : 86,35 Ko</div>
<div class="t" style="left:227.6px;top:521.4px;font-size:11px;color:#fff;transform:scaleX(0.8977);transform-origin:0 0;font-weight:700">2 Fichiers</div>
<div class="t" style="left:149.7px;top:549.8px;font-size:15px;color:#3a739f;letter-spacing:0.26px">Nom</div>
<div class="t" style="left:552.5px;top:549.8px;font-size:15px;color:#3a739f;transform:scaleX(0.9396);transform-origin:0 0">Tags</div>
<div class="t" style="left:638.2px;top:549.8px;font-size:15px;color:#3a739f;letter-spacing:-0.23px">Extension</div>
<div class="t" style="left:748.9px;top:549.8px;font-size:15px;color:#3a739f;letter-spacing:-0.09px">Taille</div>
<div class="t" style="left:888.0px;top:549.8px;font-size:15px;color:#3a739f;letter-spacing:-0.00px">Date de modification</div>
<div class="t" style="left:1069.0px;top:549.8px;font-size:15px;color:#3a739f;letter-spacing:-0.41px">Créé par</div>
<div class="t" style="left:150.3px;top:596.1px;font-size:15px;color:#3a739f;letter-spacing:-0.26px">Arborescence modèle 2022</div>
<div class="t" style="left:660.7px;top:596.1px;font-size:15px;color:#222;transform:scaleX(0.8826);transform-origin:0 0">csv</div>
<div class="t" style="left:748.9px;top:596.1px;font-size:15px;color:#222;transform:scaleX(0.9228);transform-origin:0 0">3,34 Ko</div>
<div class="t" style="left:889.0px;top:596.1px;font-size:15px;color:#222;letter-spacing:-0.27px">08/02/2022 15:29:07</div>
<div class="t" style="left:1069.0px;top:596.1px;font-size:15px;color:#222;transform:scaleX(0.8349);transform-origin:0 0">GSI</div>
<div class="t" style="left:150.3px;top:647.1px;font-size:15px;color:#3a739f;letter-spacing:-0.34px">Capture d’écran 2022-02-03 à 17.08.34</div>
<div class="t" style="left:658.7px;top:647.1px;font-size:15px;color:#222;letter-spacing:-0.14px">png</div>
<div class="t" style="left:748.9px;top:647.1px;font-size:15px;color:#222;transform:scaleX(0.9278);transform-origin:0 0">83,01 Ko</div>
<div class="t" style="left:889.0px;top:647.1px;font-size:15px;color:#222;letter-spacing:-0.27px">08/02/2022 15:29:07</div>
<div class="t" style="left:1069.0px;top:647.1px;font-size:15px;color:#222;transform:scaleX(0.8349);transform-origin:0 0">GSI</div>
<div class="t" style="left:45.9px;top:702.0px;font-size:15px;color:#333;letter-spacing:-0.08px">Nombre d'éléments par page :</div>
<div class="t" style="left:57.3px;top:726.6px;font-size:12px;color:#fff;letter-spacing:-0.07px">30</div>
<div class="t" style="left:96.8px;top:726.6px;font-size:12px;color:#333;letter-spacing:-0.47px">50</div>
<div class="t" style="left:136.1px;top:726.6px;font-size:12px;color:#333;letter-spacing:-0.27px">100</div>
<div class="t" style="left:740.6px;top:729.2px;font-size:15px;color:#777;transform:scaleX(0.8444);transform-origin:0 0">««</div>
<div class="t" style="left:778.9px;top:729.2px;font-size:15px;color:#777">«</div>
<div class="t" style="left:810.6px;top:729.2px;font-size:15px;color:#fff">1</div>
<div class="t" style="left:843.8px;top:729.2px;font-size:15px;color:#777">»</div>
<div class="t" style="left:876.5px;top:729.2px;font-size:15px;color:#777;transform:scaleX(0.8261);transform-origin:0 0">»»</div>
<!-- scrollbar -->
<div class="a" id="sbar"></div>
<div class="a" id="thumb"></div>
<div class="a" id="tabfade" style="left:190px;top:2px;width:22px;height:18px;background:linear-gradient(to right,rgba(48,50,63,0),rgba(48,50,63,.6))"></div>
<svg style="left:750px;top:405px" width="20" height="24" viewBox="750 405 20 24"><path d="M756.9 409.6 V420.4 L759.4 418.1 L761.5 423.5 L763.7 422.6 L761.5 417.5 L765.1 417.5 Z" fill="#000" stroke="#fff" stroke-width="2.2" stroke-linejoin="round" paint-order="stroke"/></svg>

</body>
</html>
